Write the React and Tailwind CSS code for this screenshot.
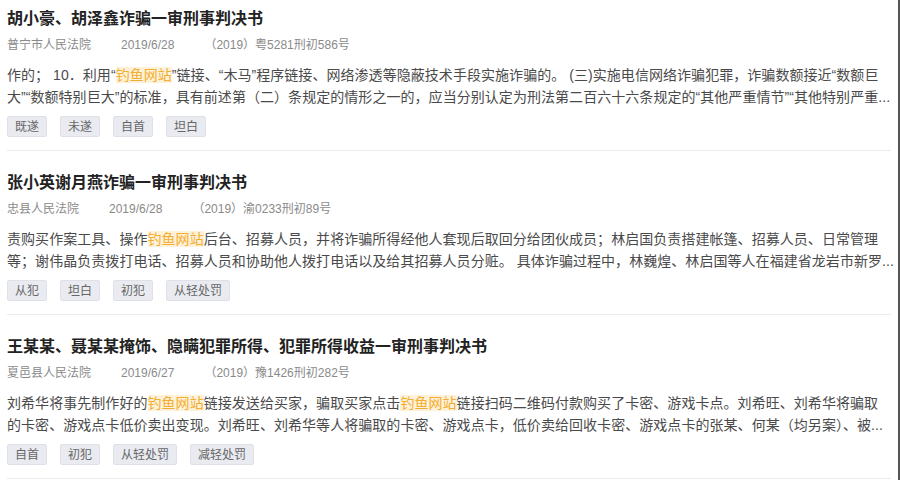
import React from "react";

const cases = [
  {
    title: "胡小豪、胡泽鑫诈骗一审刑事判决书",
    court: "普宁市人民法院",
    date: "2019/6/28",
    no: "（2019）粤5281刑初586号",
    lines: [
      ["作的； 10．利用“", { hl: "钓鱼网站" }, "”链接、“木马”程序链接、网络渗透等隐蔽技术手段实施诈骗的。 (三)实施电信网络诈骗犯罪，诈骗数额接近“数额巨"],
      ["大”“数额特别巨大”的标准，具有前述第（二）条规定的情形之一的，应当分别认定为刑法第二百六十六条规定的“其他严重情节”“其他特别严重..."],
    ],
    tags: ["既遂", "未遂", "自首", "坦白"],
  },
  {
    title: "张小英谢月燕诈骗一审刑事判决书",
    court: "忠县人民法院",
    date: "2019/6/28",
    no: "（2019）渝0233刑初89号",
    lines: [
      ["责购买作案工具、操作", { hl: "钓鱼网站" }, "后台、招募人员，并将诈骗所得经他人套现后取回分给团伙成员；林启国负责搭建帐篷、招募人员、日常管理"],
      ["等；谢伟晶负责拨打电话、招募人员和协助他人拨打电话以及给其招募人员分赃。 具体诈骗过程中，林巍煌、林启国等人在福建省龙岩市新罗..."],
    ],
    tags: ["从犯", "坦白", "初犯", "从轻处罚"],
  },
  {
    title: "王某某、聂某某掩饰、隐瞒犯罪所得、犯罪所得收益一审刑事判决书",
    court: "夏邑县人民法院",
    date: "2019/6/27",
    no: "（2019）豫1426刑初282号",
    lines: [
      ["刘希华将事先制作好的", { hl: "钓鱼网站" }, "链接发送给买家，骗取买家点击", { hl: "钓鱼网站" }, "链接扫码二维码付款购买了卡密、游戏卡点。刘希旺、刘希华将骗取"],
      ["的卡密、游戏点卡低价卖出变现。刘希旺、刘希华等人将骗取的卡密、游戏点卡，低价卖给回收卡密、游戏点卡的张某、何某（均另案）、被..."],
    ],
    tags: ["自首", "初犯", "从轻处罚", "减轻处罚"],
  },
];

const Line = ({ parts }) => (
  <div className="whitespace-nowrap">
    {parts.map((p, i) =>
      typeof p === "string" ? (
        <span key={i}>{p}</span>
      ) : (
        <span key={i} className="bg-[#fdf2d9] text-[#f4ad30]">
          {p.hl}
        </span>
      )
    )}
  </div>
);

const CaseItem = ({ item, first }) => (
  <div
    className={
      first
        ? "pt-[7px] pb-[13px] border-b border-[#ebebeb]"
        : "pt-[20px] pb-[13px] border-b border-[#ebebeb]"
    }
  >
    <h2 className="text-[16px] leading-[24px] font-bold text-[#222]">
      {item.title}
    </h2>
    <div className="mt-[4px] flex items-center gap-[30px] text-[12px] leading-[20px] text-[#8a8a8a]">
      <span>{item.court}</span>
      <span>{item.date}</span>
      <span>{item.no}</span>
    </div>
    <div className="mt-[9px] text-[14px] tracking-[0.05px] leading-[22px] text-[#4a4a4a]">
      {item.lines.map((l, i) => (
        <Line key={i} parts={l} />
      ))}
    </div>
    <div className="mt-[8px] flex gap-[13px]">
      {item.tags.map((t) => (
        <span
          key={t}
          className="h-[21px] px-[7px] flex items-center text-[12px] text-[#666] bg-[#e9ebf1] border border-[#dfe1e8] rounded-[2px]"
        >
          {t}
        </span>
      ))}
    </div>
  </div>
);

export default function App() {
  return (
    <div
      className="w-[900px] h-[480px] overflow-hidden bg-white border-r-2 border-[#555] pl-[7px] pr-[7px]"
      style={{ fontFamily: '"Liberation Sans", "Noto Sans CJK SC", sans-serif' }}
    >
      {cases.map((c, i) => (
        <CaseItem key={i} item={c} first={i === 0} />
      ))}
    </div>
  );
}
